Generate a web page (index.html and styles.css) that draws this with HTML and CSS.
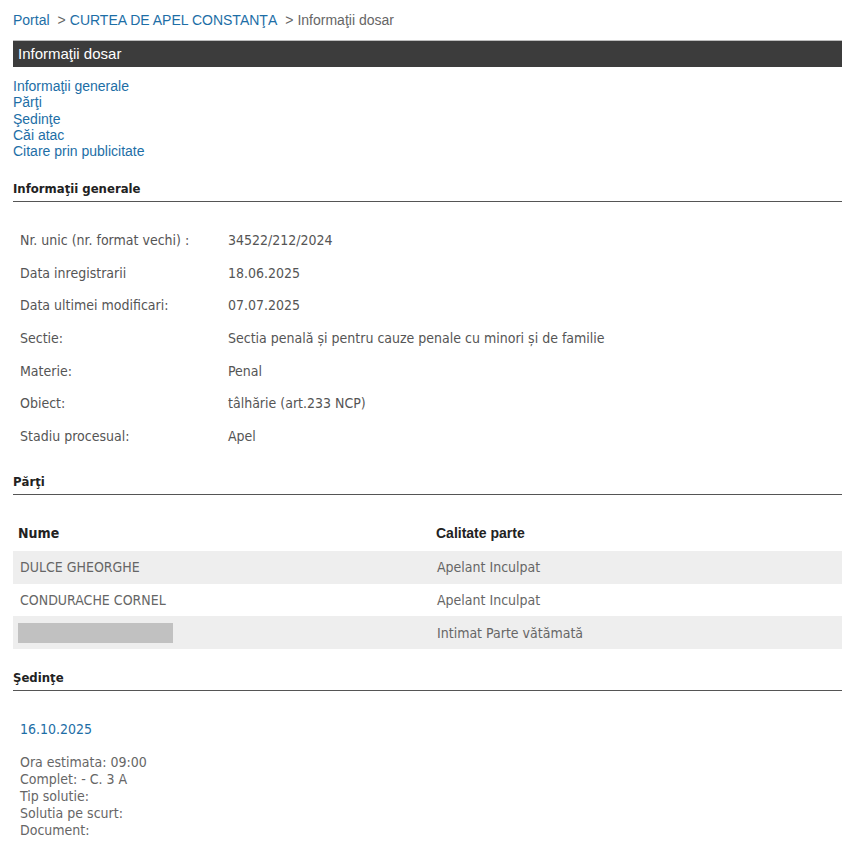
FILE: index.html
```html
<!DOCTYPE html>
<html lang="ro">
<head>
<meta charset="utf-8">
<title>Informaţii dosar</title>
<link rel="stylesheet" href="styles.css">
</head>
<body>
<div class="page">
  <div class="crumbs"><a href="#" class="link">Portal</a><span class="sep">&gt;</span><a href="#" class="link">CURTEA DE APEL CONSTANŢA</a><span class="sep">&gt;</span><span class="cur">Informaţii dosar</span></div>
  <div class="titlebar">Informaţii dosar</div>
  <nav class="toc">
    <a href="#" class="link">Informaţii generale</a>
    <a href="#" class="link">Părţi</a>
    <a href="#" class="link">Şedinţe</a>
    <a href="#" class="link">Căi atac</a>
    <a href="#" class="link">Citare prin publicitate</a>
  </nav>

  <h2 class="sect sect-first">Informaţii generale</h2>
  <div class="info">
    <div class="lbl">Nr. unic (nr. format vechi) :</div><div class="val">34522/212/2024</div>
    <div class="lbl">Data inregistrarii</div><div class="val">18.06.2025</div>
    <div class="lbl">Data ultimei modificari:</div><div class="val">07.07.2025</div>
    <div class="lbl">Sectie:</div><div class="val">Sectia penală și pentru cauze penale cu minori și de familie</div>
    <div class="lbl">Materie:</div><div class="val">Penal</div>
    <div class="lbl">Obiect:</div><div class="val">tâlhărie (art.233 NCP)</div>
    <div class="lbl">Stadiu procesual:</div><div class="val">Apel</div>
  </div>

  <h2 class="sect">Părţi</h2>
  <div class="parties">
    <div class="prow head"><div class="c1">Nume</div><div class="c2">Calitate parte</div></div>
    <div class="prow alt"><div class="c1">DULCE GHEORGHE</div><div class="c2">Apelant Inculpat</div></div>
    <div class="prow"><div class="c1">CONDURACHE CORNEL</div><div class="c2">Apelant Inculpat</div></div>
    <div class="prow alt"><div class="c1"><span class="redacted"></span></div><div class="c2">Intimat Parte vătămată</div></div>
  </div>

  <h2 class="sect">Şedinţe</h2>
  <div class="hearing">
    <div class="hdate">16.10.2025</div>
    <div class="hlines">
      <div>Ora estimata: 09:00</div>
      <div>Complet: - C. 3 A</div>
      <div>Tip solutie:</div>
      <div>Solutia pe scurt:</div>
      <div>Document:</div>
    </div>
  </div>
</div>
</body>
</html>
```
FILE: styles.css
```css
html, body {
  margin: 0;
  padding: 0;
  background: #fff;
}
.page {
  width: 829px;
  padding: 12px 0 0 13px;
  font-family: "Liberation Sans", Arial, sans-serif;
  font-size: 14px;
  color: #555;
}
.link {
  color: #1d6ea6;
  text-decoration: none;
}
.crumbs {
  height: 17px;
  line-height: 17px;
}
.crumbs .sep {
  color: #666;
  margin: 0 4px 0 8px;
}
.crumbs .cur {
  color: #666;
}
.titlebar {
  margin-top: 11px;
  height: 26px;
  line-height: 26px;
  background: #3c3c3c;
  border-top: 1px solid #bdbdbd;
  color: #fff;
  font-size: 15px;
  padding-left: 5px;
}
.toc {
  display: flex;
  flex-direction: column;
  margin-top: 11px;
  line-height: 16.25px;
}
.sect {
  margin: 21.5px 0 0 0;
  font-family: "DejaVu Sans Condensed", "DejaVu Sans", sans-serif;
  font-weight: bold;
  font-size: 13px;
  color: #222;
  border-bottom: 1px solid #555;
  padding-bottom: 5px;
  line-height: 15px;
}
.sect-first {
  margin-top: 22px;
}
.info {
  display: grid;
  grid-template-columns: 208px 1fr;
  padding: 21.4px 0 0 7px;
  grid-auto-rows: 32.7px;
  font-family: "DejaVu Sans Condensed", "DejaVu Sans", sans-serif;
  font-size: 14px;
  color: #555;
  align-items: center;
}
.parties {
  margin-top: 22px;
  font-family: "DejaVu Sans Condensed", "DejaVu Sans", sans-serif;
  font-size: 14px;
  color: #666;
}
.prow {
  display: grid;
  grid-template-columns: 417px 1fr;
  height: 32.67px;
  align-items: center;
}
.prow .c1,
.prow .c2 {
  padding-left: 7px;
}
.prow.alt {
  background: #eeeeee;
}
.prow.head {
  color: #222;
  font-weight: bold;
  height: 34px;
  align-items: start;
  padding-top: 8px;
  box-sizing: border-box;
}
.prow.head .c1 {
  padding-left: 5px;
}
.prow.head .c2 {
  font-family: "Liberation Sans", Arial, sans-serif;
  font-size: 14px;
  padding-left: 6px;
}
.redacted {
  display: block;
  width: 155px;
  height: 20px;
  margin-left: -2px;
  background: #c1c1c1;
}
.hearing {
  padding: 29.5px 0 0 7px;
  font-family: "DejaVu Sans Condensed", "DejaVu Sans", sans-serif;
  font-size: 14px;
  color: #666;
}
.hdate {
  color: #1d6ea6;
  line-height: 17px;
}
.hlines {
  margin-top: 16px;
  line-height: 17px;
}
```
